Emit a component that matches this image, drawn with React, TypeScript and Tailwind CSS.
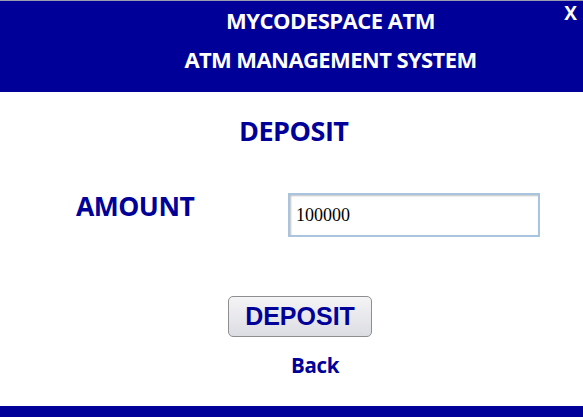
export default function App() {
  return (
    <div className="w-[583px] h-[417px] bg-white flex flex-col overflow-hidden" style={{ fontFamily: '"Open Sans", sans-serif' }}>
      <div className="h-[92px] bg-[#000099] border-t border-[#9a9ab0] relative flex flex-col items-center pl-[78px] pt-[5px] text-white font-bold">
        <div className="text-[22px] leading-[28px] tracking-[-0.5px]">MYCODESPACE ATM</div>
        <div className="text-[22px] leading-[28px] mt-[11px] tracking-[-0.6px]">ATM MANAGEMENT SYSTEM</div>
        <div className="absolute right-[6px] top-[0px] text-[19px] leading-[24px]">X</div>
      </div>
      <div className="flex-1 flex flex-col text-[#000099] font-bold">
        <div className="pl-[239px] pt-[22px] text-[27px] leading-[34px] tracking-[-0.5px]">DEPOSIT</div>
        <div className="flex items-start mt-[45px]">
          <div className="pl-[76px] w-[288px] -mt-[4px] text-[26.5px] leading-[34px] tracking-[-0.5px]">AMOUNT</div>
          <div className="w-[252px] h-[44px] border-2 border-[#a9c4df] shadow-[inset_1px_1px_2px_rgba(0,0,0,0.25)] flex items-center pl-[6px] text-black font-normal text-[18px]" style={{ fontFamily: '"Liberation Serif", serif' }}>
            100000
          </div>
        </div>
        <div className="flex justify-center pl-[17px] mt-[59px]">
          <div className="w-[144px] h-[41px] rounded-[5px] border border-[#8e8e8e] bg-gradient-to-b from-[#f4f4f6] to-[#dcdde3] flex items-center justify-center text-[25px]" style={{ fontFamily: '"Liberation Sans", sans-serif' }}>
            DEPOSIT
          </div>
        </div>
        <div className="pl-[291px] mt-[14px] text-[20.5px] leading-[28px] tracking-[-0.3px]">Back</div>
      </div>
      <div className="h-[11px] bg-[#000099]" />
    </div>
  );
}
